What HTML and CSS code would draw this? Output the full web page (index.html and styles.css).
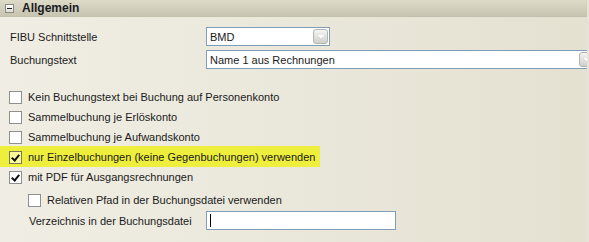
FILE: index.html
```html
<!DOCTYPE html>
<html lang="de">
<head>
<meta charset="utf-8">
<link rel="stylesheet" href="styles.css">
</head>
<body>
<div class="panel">
  <div class="header">
    <span class="toggle"><span class="minus"></span></span>
    <span class="title">Allgemein</span>
  </div>
  <div class="content">
    <div class="field first">
      <span class="label">FIBU Schnittstelle</span>
      <div class="combo short"><span class="value">BMD</span><span class="dd"><span class="arrow"></span></span></div>
    </div>
    <div class="field">
      <span class="label">Buchungstext</span>
      <div class="combo long"><span class="value">Name 1 aus Rechnungen</span><span class="dd"><span class="arrow"></span></span></div>
    </div>
    <div class="checks">
      <div class="check"><span class="box"></span><span>Kein Buchungstext bei Buchung auf Personenkonto</span></div>
      <div class="check"><span class="box"></span><span>Sammelbuchung je Erlöskonto</span></div>
      <div class="check"><span class="box"></span><span>Sammelbuchung je Aufwandskonto</span></div>
      <div class="check hl"><span class="box on"></span><span>nur Einzelbuchungen (keine Gegenbuchungen) verwenden</span></div>
      <div class="check"><span class="box on"></span><span>mit PDF für Ausgangsrechnungen</span></div>
      <div class="check sub"><span class="box"></span><span>Relativen Pfad in der Buchungsdatei verwenden</span></div>
    </div>
    <div class="field dir">
      <span class="label">Verzeichnis in der Buchungsdatei</span>
      <div class="input"><span class="caret"></span></div>
    </div>
  </div>
</div>
</body>
</html>
```
FILE: styles.css
```css
html, body {
  margin: 0;
  padding: 0;
}
body {
  width: 589px;
  height: 242px;
  overflow: hidden;
  background: #e6e4d6;
  font-family: "Liberation Sans", Arial, sans-serif;
  font-size: 11px;
  color: #1a1a1a;
}
.panel {
  width: 587px;
  height: 242px;
  overflow: hidden;
  background: linear-gradient(to right, #f0eee4, #e4e1d1);
}
.header {
  height: 17px;
  display: flex;
  align-items: center;
  background: linear-gradient(to bottom, #dddbc8, #c7c5b0);
  border-bottom: 1px solid #c3c1ad;
  box-sizing: border-box;
}
.toggle {
  width: 9px;
  height: 9px;
  margin-left: 5px;
  box-sizing: border-box;
  border: 1px solid #8a8a80;
  background: linear-gradient(#ffffff, #dcdcd4);
  display: flex;
  align-items: center;
  justify-content: center;
}
.minus {
  width: 5px;
  height: 1px;
  background: #222;
}
.title {
  margin-left: 8px;
  font-weight: bold;
  font-size: 12px;
  color: #1a1a24;
}
.content {
  padding-left: 10px;
}
.field {
  display: flex;
  align-items: center;
  height: 19px;
  margin-top: 4px;
}
.field.first {
  margin-top: 10px;
}
.label {
  width: 196px;
  flex: none;
}
.combo, .input {
  height: 19px;
  box-sizing: border-box;
  border: 1px solid #7f9db9;
  background: #fff;
  display: flex;
  align-items: center;
  flex: none;
}
.combo .value {
  flex: 1;
  padding-left: 3px;
}
.combo.short {
  width: 124px;
}
.combo.long {
  width: 390px;
}
.dd {
  width: 15px;
  height: 15px;
  margin-right: 1px;
  box-sizing: border-box;
  border: 1px solid #b4b4b0;
  border-radius: 3px;
  background: linear-gradient(#f4f4f2, #cfcfcb);
  display: flex;
  align-items: center;
  justify-content: center;
}
.arrow {
  width: 0;
  height: 0;
  border-left: 4px solid transparent;
  border-right: 4px solid transparent;
  border-top: 4px solid #ffffff;
  filter: drop-shadow(0 0 0.5px #8c8c8c);
  margin-top: 1px;
}
.checks {
  margin-top: 18px;
  margin-left: -10px;
}
.check {
  display: flex;
  align-items: center;
  height: 20px;
  padding-left: 9px;
}
.check .box {
  width: 13px;
  height: 13px;
  box-sizing: border-box;
  border: 1px solid #8e8f8f;
  background: #fff;
  margin-right: 6px;
  flex: none;
  position: relative;
}
.check .box.on::after {
  content: "";
  position: absolute;
  left: 2px;
  top: 1px;
  width: 3px;
  height: 6px;
  border-right: 2px solid #111;
  border-bottom: 2px solid #111;
  transform: translate(1px, 0) rotate(40deg);
}
.check.hl {
  width: 320px;
  box-sizing: border-box;
  background: #eeee3c;
  box-shadow: 0 -1px 0 #eeee3c;
}
.check.hl .box {
  border-color: #7a7a50;
  background: #fbfb9c;
}
.check.sub {
  padding-left: 28px;
  margin-top: 3px;
}
.field.dir {
  margin-top: 1px;
  padding-left: 19px;
}
.field.dir .label {
  width: 177px;
}
.input {
  width: 190px;
}
.caret {
  width: 1px;
  height: 13px;
  background: #000;
  margin-left: 3px;
}
```
